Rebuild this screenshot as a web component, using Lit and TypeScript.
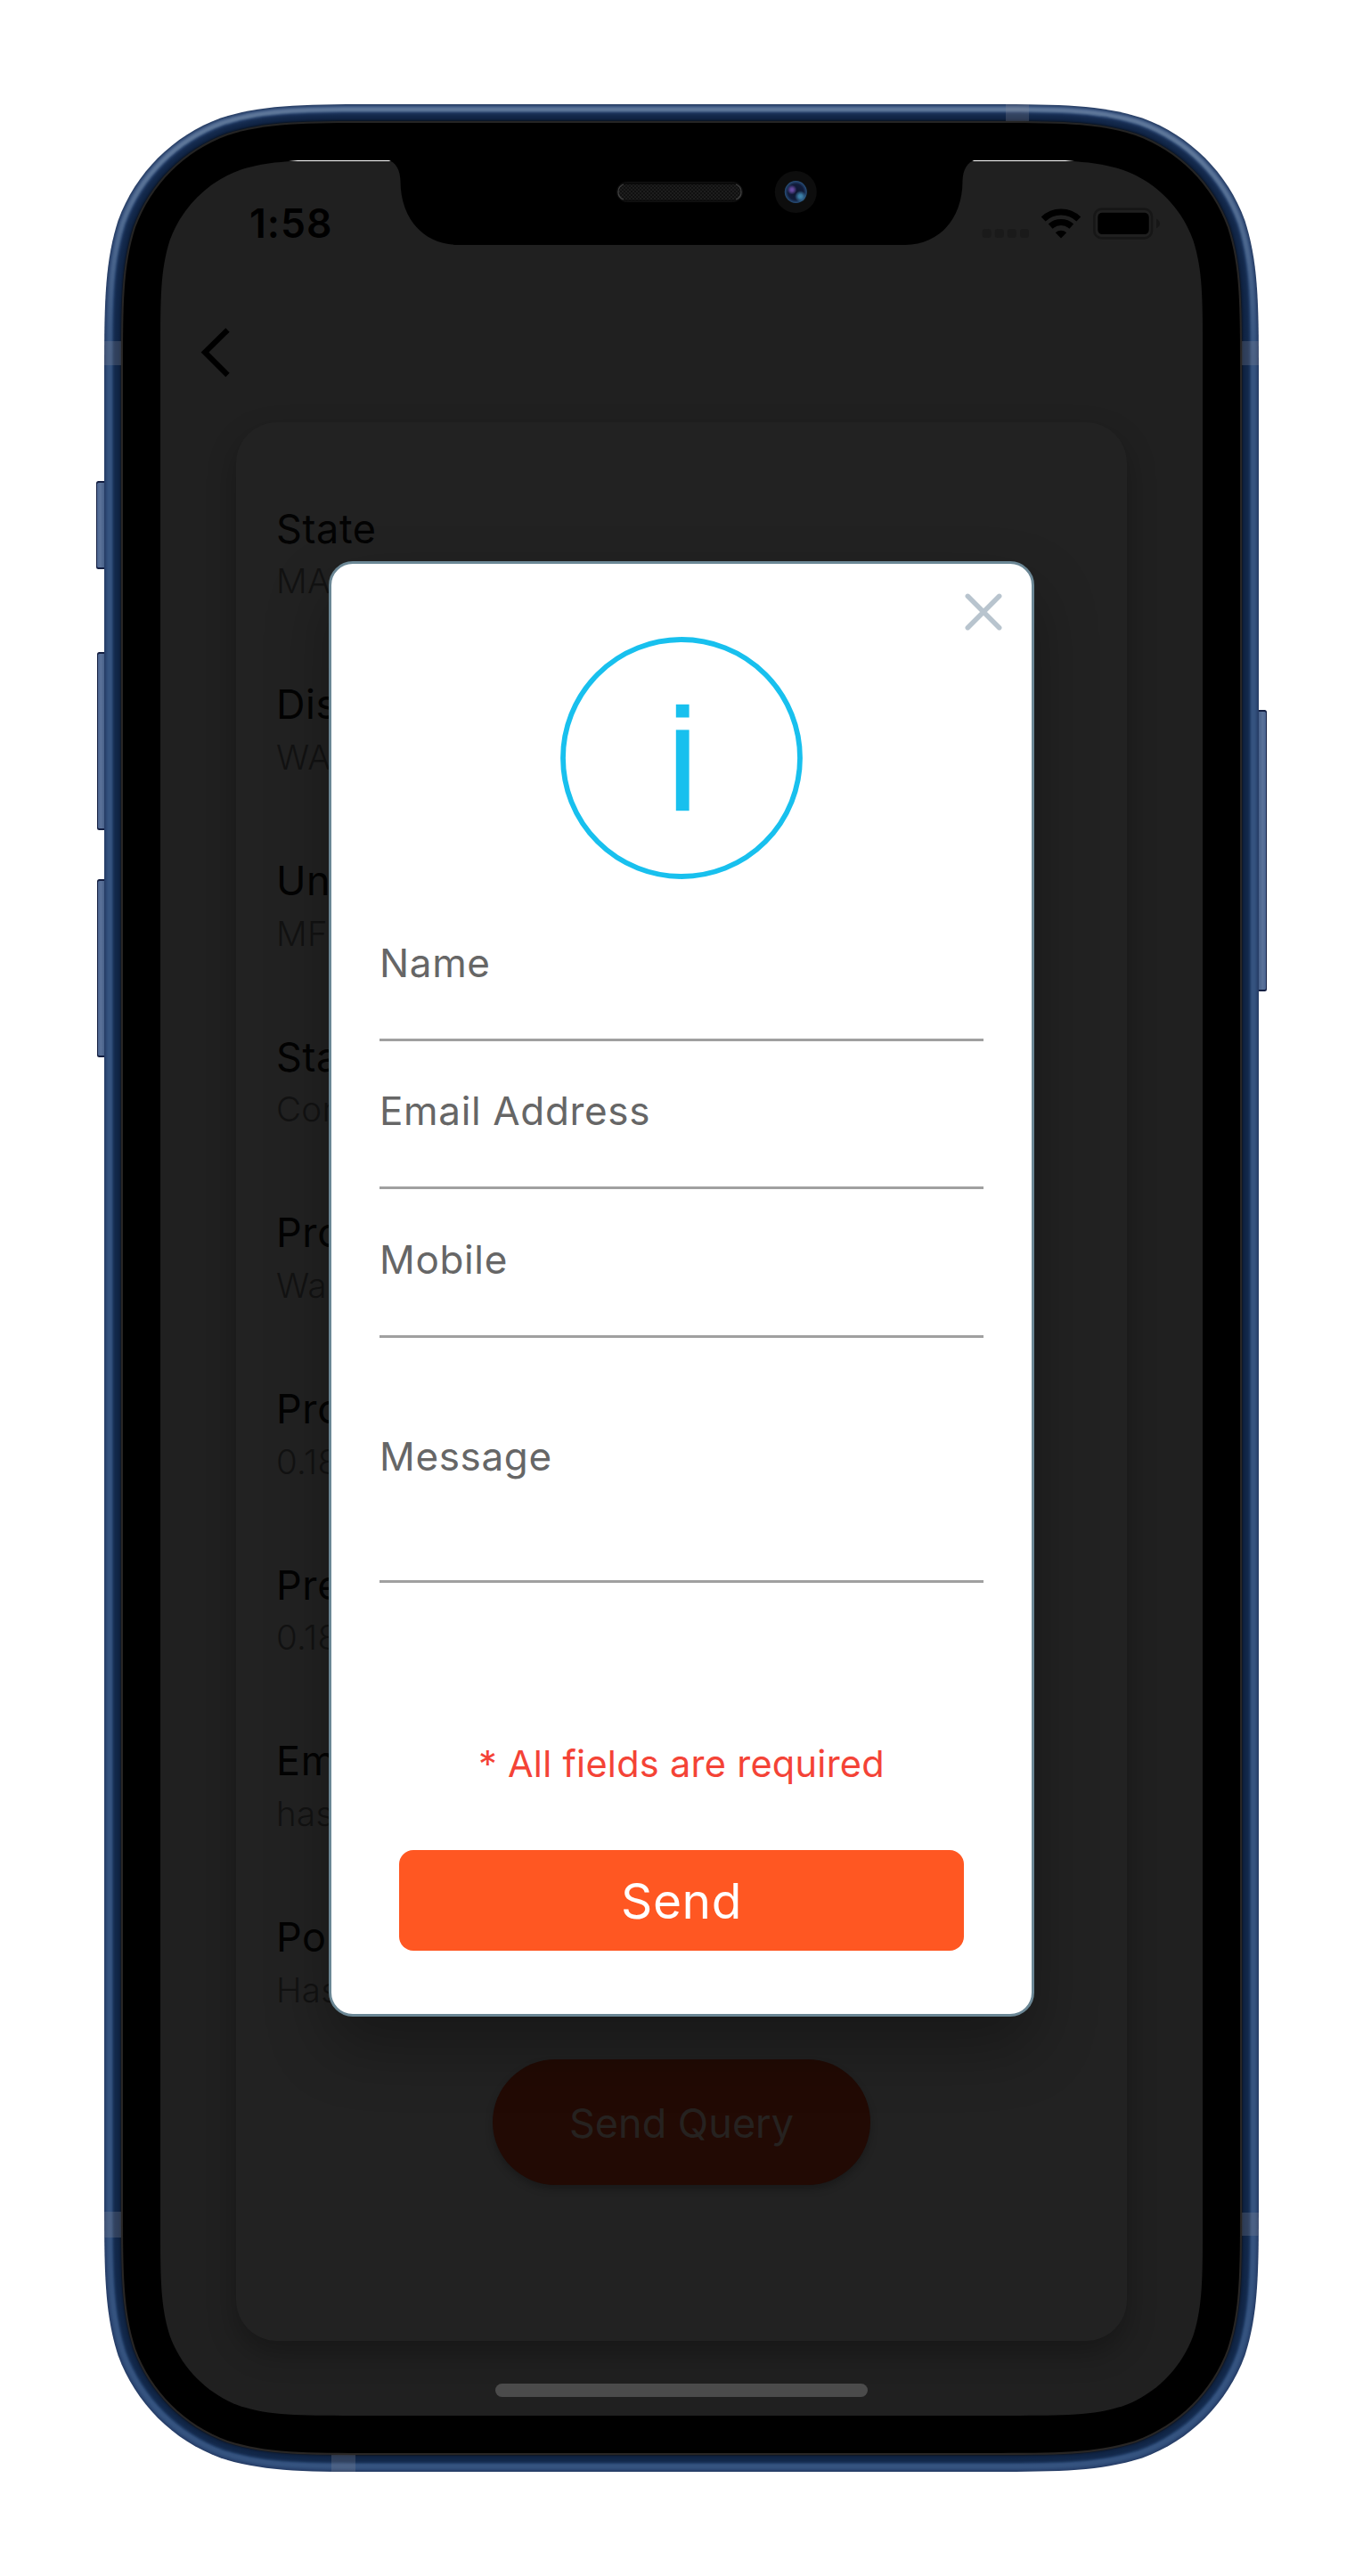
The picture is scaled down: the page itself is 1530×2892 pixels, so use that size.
import { LitElement, html, css, svg } from "lit";
import { customElement } from "lit/decorators.js";

/** Rounded rectangle with continuous-curvature corners. */
function squircle(x: number, y: number, w: number, h: number, r: number): string {
  const a = 1.528665 * r, b = 1.08849296 * r, c = 0.86840694 * r, d = 0.63149379 * r;
  const e = 0.07491139 * r, f = 0.37282383 * r, g = 0.16905956 * r;
  const R = x + w, B = y + h;
  return [
    `M${x + a} ${y}H${R - a}`,
    `C${R - b} ${y} ${R - c} ${y} ${R - d} ${y + e}`,
    `C${R - f} ${y + g} ${R - g} ${y + f} ${R - e} ${y + d}`,
    `C${R} ${y + c} ${R} ${y + b} ${R} ${y + a}V${B - a}`,
    `C${R} ${B - b} ${R} ${B - c} ${R - e} ${B - d}`,
    `C${R - g} ${B - f} ${R - f} ${B - g} ${R - d} ${B - e}`,
    `C${R - c} ${B} ${R - b} ${B} ${R - a} ${B}H${x + a}`,
    `C${x + b} ${B} ${x + c} ${B} ${x + d} ${B - e}`,
    `C${x + f} ${B - g} ${x + g} ${B - f} ${x + e} ${B - d}`,
    `C${x} ${B - c} ${x} ${B - b} ${x} ${B - a}V${y + a}`,
    `C${x} ${y + b} ${x} ${y + c} ${x + e} ${y + d}`,
    `C${x + g} ${y + f} ${x + f} ${y + g} ${x + d} ${y + e}`,
    `C${x + c} ${y} ${x + b} ${y} ${x + a} ${y}Z`,
  ].join("");
}

/** Metal rim, one colour per pixel from the outside in: [top, sides]. */
const RIM: [string, string][] = [
  ["#2a4066", "#263d66"], ["#304a73", "#29426d"], ["#3e5780", "#2d4874"], ["#4c668d", "#304d79"],
  ["#587196", "#33517d"], ["#5d7699", "#35537f"], ["#5d7698", "#35537f"], ["#526c90", "#34527e"],
  ["#3e587e", "#2e4b77"], ["#29426a", "#234069"], ["#1b335a", "#1a3359"], ["#172d52", "#152c51"],
  ["#142a4d", "#12284b"], ["#12284a", "#112748"], ["#112648", "#102647"], ["#102445", "#102445"],
  ["#0e2140", "#0e2241"], ["#0c1d38", "#0e1f3b"], ["#0b1626", "#0e1828"], ["#262524", "#2a2725"],
  ["#232323", "#272524"],
];

@customElement("phone-frame")
export class PhoneFrame extends LitElement {
  static styles = css`
    :host { display: block; width: 1530px; height: 2892px; }
    svg { display: block; }
  `;

  private sideButton(x: number, y: number, w: number, h: number) {
    return svg`
      <rect x=${x} y=${y} width=${w + 3} height=${h} rx="2.5" fill="#141f42"/>
      <rect x=${x + 1} y=${y + 2} width=${w + 1} height=${h - 4} rx="1.5" fill="url(#btn)"/>`;
  }

  render() {
    return html`<svg width="1530" height="2892" viewBox="0 0 1530 2892">
      <defs>
        ${RIM.map(([top, side], i) => svg`
          <linearGradient id=${`rim${i}`} gradientUnits="userSpaceOnUse" x1="0" y1="117" x2="0" y2="400">
            <stop offset="0" stop-color=${top}/><stop offset=".2" stop-color=${top}/>
            <stop offset="1" stop-color=${side}/>
          </linearGradient>`)}
        <linearGradient id="btn" x1="0" x2="1" y1="0" y2="0">
          <stop offset="0" stop-color="#4b6490"/><stop offset=".35" stop-color="#5b7299"/>
          <stop offset="1" stop-color="#405a82"/>
        </linearGradient>
        <pattern id="mesh" width="4" height="4" patternUnits="userSpaceOnUse">
          <rect width="4" height="4" fill="#101010"/>
          <rect width="2" height="2" fill="#1d1d1d"/><rect x="2" y="2" width="2" height="2" fill="#1d1d1d"/>
        </pattern>
        <radialGradient id="lens"><stop offset="0" stop-color="#0e1630"/>
          <stop offset=".7" stop-color="#111c3a"/><stop offset="1" stop-color="#28507c"/></radialGradient>
        <radialGradient id="violet"><stop offset="0" stop-color="#6d4fa8"/>
          <stop offset=".35" stop-color="#5d4596"/>
          <stop offset="1" stop-color="#5d4596" stop-opacity="0"/></radialGradient>
        <radialGradient id="teal"><stop offset="0" stop-color="#3f86ad"/>
          <stop offset=".35" stop-color="#38779f"/>
          <stop offset="1" stop-color="#38779f" stop-opacity="0"/></radialGradient>
      </defs>

      ${this.sideButton(108, 540, 9, 99)}
      ${this.sideButton(109, 732, 8, 200)}
      ${this.sideButton(109, 987, 8, 200)}
      <g transform="translate(1530 0) scale(-1 1)">${this.sideButton(108, 797, 9, 316)}</g>

      ${RIM.map((_, i) => svg`<path fill=${`url(#rim${i})`}
        d=${squircle(117 + i, 117 + i, 1296 - 2 * i, 2658 - 2 * i, 207 - i)}/>`)}
      <g fill="#8c8c96" fill-opacity=".26">
        <rect x="117" y="383" width="19" height="27"/><rect x="1394" y="383" width="19" height="27"/>
        <rect x="117" y="2483" width="19" height="29"/><rect x="1394" y="2484" width="19" height="26"/>
        <rect x="1129" y="117" width="26" height="19"/><rect x="372" y="2756" width="27" height="19"/>
      </g>
      <path fill="#000" d=${squircle(138, 138, 1254, 2616, 186)}/>
      <path fill="#202020" d=${squircle(180, 180, 1170, 2532, 142)}/>
      <path fill="#fff" d="M324 181L334 180H1196L1206 181Z"/>
      <path fill="#000" d="M434 179C445 182 449 191 449.5 203C449.5 246 476 275 515 275H1015C1054 275 1080.500 246 1080.500 203C1081 191 1085 182 1096 179Z"/>

      <rect x="692.500" y="204.500" width="141" height="22" rx="11" fill="#0a0a0a" stroke="#111"/>
      <rect x="694" y="207" width="138" height="17.500" rx="8.700" fill="url(#mesh)"/>
      <path d="M700 207a9 9 0 0 0 0 17M826 207a9 9 0 0 1 0 17" fill="none" stroke="#444" stroke-width="1.200"/>
      <circle cx="893.300" cy="215.500" r="23.500" fill="#0d0d0d"/>
      <circle cx="893.300" cy="215.500" r="12.500" fill="url(#lens)"/>
      <circle cx="889" cy="213" r="5.500" fill="url(#violet)"/>
      <circle cx="898.500" cy="220.500" r="6.500" fill="url(#teal)"/>
    </svg>`;
  }
}

@customElement("status-bar")
export class StatusBar extends LitElement {
  static styles = css`
    :host { display: flex; justify-content: space-between; align-items: center;
      padding: 44px 47px 0 100px; height: 54px; }
    .time { font: 600 44.500px/54px Inter, sans-serif; letter-spacing: 1px; color: #000; }
    .icons { display: block; }
  `;
  render() {
    return html`
      <span class="time">1:58</span>
      <svg class="icons" width="202" height="54" viewBox="1101 224 202 54">
        ${[0, 1, 2, 3].map((i) => svg`<rect x=${1102.7 + i * 14.1} y="257" width="10" height="10" rx="3" fill="#1a1a1a"/>`)}
        <g fill="none" stroke="#000">
          <path stroke-width="7" d="M1171.200 245.900A28.500 28.500 0 0 1 1210.800 245.900"/>
          <path stroke-width="7" d="M1179.200 254.200A17.500 17.500 0 0 1 1202.800 254.200"/>
        </g>
        <path d="M1184.800 261.200A9.200 9.200 0 0 1 1197.200 261.200L1191 267.400Z" fill="#000"/>
        <rect x="1228.300" y="234.600" width="64.700" height="32.800" rx="8.500" fill="none" stroke="#161616" stroke-width="2.600"/>
        <rect x="1232.300" y="238.700" width="57.400" height="24.400" rx="5" fill="#000"/>
        <path d="M1298 245.700Q1302 247.500 1302 251T1298 256.300Z" fill="#161616"/>
      </svg>`;
  }
}

const DETAILS: [string, string][] = [
  ["State", "MA"], ["Dis", "WA"], ["Un", "MF"], ["Sta", "Con"], ["Pro", "Wa"],
  ["Pro", "0.18"], ["Pre", "0.18"], ["Em", "has"], ["Poi", "Has"],
];

@customElement("detail-card")
export class DetailCard extends LitElement {
  static styles = css`
    :host { display: block; box-sizing: border-box; width: 1000px; height: 2154px; margin: 0 auto;
      padding: 91.500px 45px 0; border-radius: 46px; background: #222;
      box-shadow: 0 14px 32px rgba(0, 0, 0, 0.28);
      font-family: Inter, sans-serif; }
    .rows { display: grid; grid-auto-rows: 115px; row-gap: 82.700px; }
    .row { display: flex; flex-direction: column; gap: 2.700px; }
    .label { font-size: 45px; line-height: 56px; color: #030303; letter-spacing: 0.6px; }
    .value { font-size: 38.500px; line-height: 56px; color: #121212; font-weight: 300; letter-spacing: 0.3px; }
    .query { display: flex; align-items: center; justify-content: center; box-sizing: border-box;
      width: 424px; height: 141px; margin: 49.500px auto 0; padding-top: 3px; border-radius: 71px;
      background: #220a04; color: #262220; font-size: 45px; box-shadow: 0 5px 8px rgba(0, 0, 0, 0.25); }
  `;
  render() {
    return html`
      <div class="rows">
        ${DETAILS.map(([label, value]) => html`<div class="row">
          <span class="label">${label}</span><span class="value">${value}</span>
        </div>`)}
      </div>
      <div class="query">Send Query</div>`;
  }
}

@customElement("query-dialog")
export class QueryDialog extends LitElement {
  static styles = css`
    :host { display: flex; flex-direction: column; box-sizing: border-box; width: 792px; height: 1634px;
      padding: 82px 54px 0; border: 3px solid #6b8795; border-radius: 27px; background: #fff;
      box-shadow: 0 34px 70px rgba(0, 0, 0, 0.3); font-family: Inter, sans-serif; position: relative; }
    .close { position: absolute; top: 33px; right: 33px; }
    .info { align-self: center; display: block; }
    .field { box-sizing: border-box; height: 166.700px; padding-top: 51.700px; border-bottom: 3px solid #a0a0a0;
      color: #666; font-size: 44px; line-height: 54px; font-weight: 370; letter-spacing: 0.65px; }
    .first { margin-top: 15px; }
    .message { height: 274.600px; padding-top: 106.300px; }
    .note { margin-top: 178.500px; text-align: center; font-size: 41.500px; line-height: 50px; color: #f44336;
      letter-spacing: 0.27px; }
    .send { display: flex; align-items: center; justify-content: center; width: 634px; height: 113px;
      margin: 72px auto 0; border-radius: 16px; background: #ff5722; color: #fff; font-size: 55px;
      font-weight: 430; letter-spacing: 0.6px; }
  `;
  render() {
    return html`
      <svg class="close" width="42" height="42" viewBox="0 0 42 42" fill="none" stroke="#b8c4ce"
        stroke-width="5.500" stroke-linecap="round"><path d="M3.300 3.300L38.700 38.700M38.700 3.300L3.300 38.700"/></svg>
      <svg class="info" width="272" height="272" viewBox="0 0 272 272">
        <circle cx="136" cy="136" r="133" fill="none" stroke="#18c0ee" stroke-width="5.800"/>
        <g fill="#18c0ee"><rect x="129.800" y="75.800" width="14.800" height="14.700"/>
          <rect x="129.800" y="104.400" width="14.800" height="90.800"/></g>
      </svg>
      <div class="field first">Name</div>
      <div class="field">Email Address</div>
      <div class="field">Mobile</div>
      <div class="field message">Message</div>
      <div class="note">* All fields are required</div>
      <div class="send">Send</div>`;
  }
}

@customElement("app-root")
export class AppRoot extends LitElement {
  static styles = css`
    :host { display: block; position: relative; width: 1530px; height: 2892px; background: #fff; overflow: hidden; }
    .frame { position: absolute; inset: 0; }
    .screen { position: relative; display: flex; flex-direction: column; box-sizing: border-box;
      width: 1530px; height: 2892px; padding: 180px; }
    .back { display: block; margin: 88px 0 0 45px; flex: none; }
    .card { margin-top: 50px; }
    .home { width: 418px; height: 15px; margin: 48px auto 0; border-radius: 8px; background: #4b4b4b; flex: none; }
    .overlay { position: absolute; inset: 630px 0 0 369px; }
  `;
  render() {
    return html`
      <phone-frame class="frame"></phone-frame>
      <div class="screen">
        <status-bar></status-bar>
        <svg class="back" width="36" height="58" viewBox="225 366 36 58" fill="none" stroke="#000" stroke-width="6.200">
          <path d="M255.500 370.500L230 395.500L255.500 421"/>
        </svg>
        <detail-card class="card"></detail-card>
        <div class="home"></div>
      </div>
      <div class="overlay"><query-dialog></query-dialog></div>`;
  }
}
